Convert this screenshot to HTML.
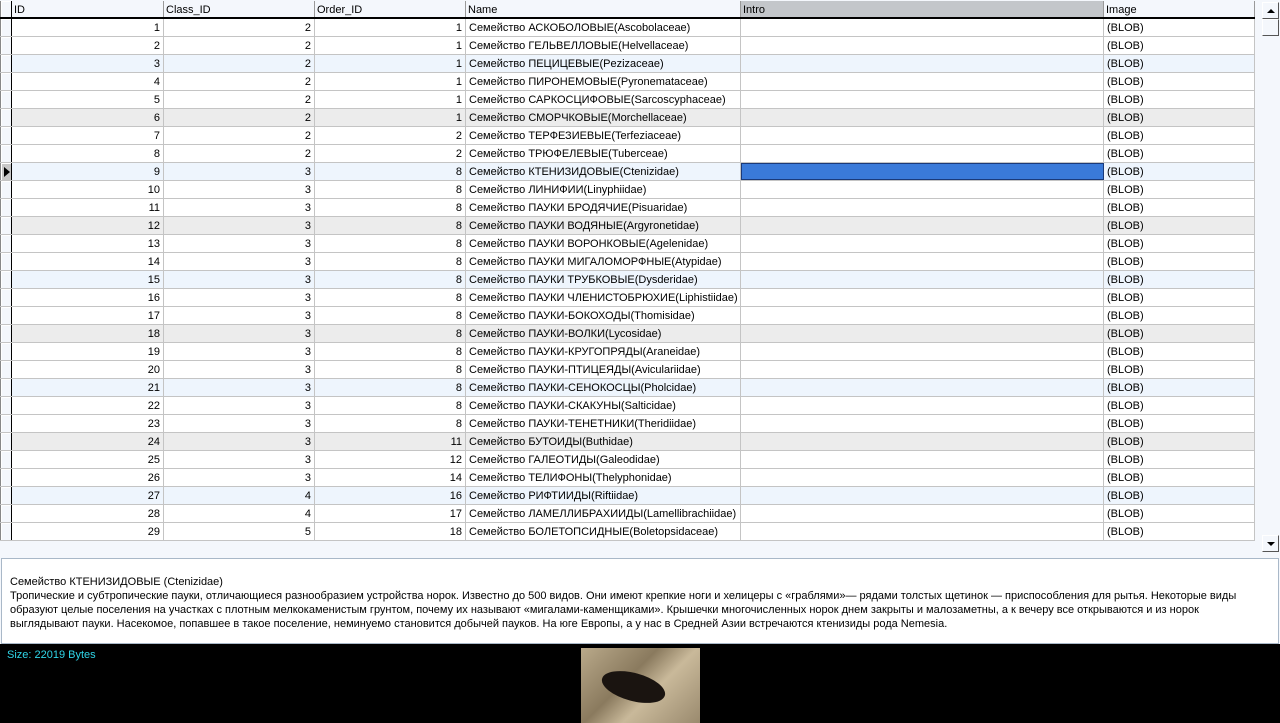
<!DOCTYPE html>
<html><head><meta charset="utf-8"><style>
*{box-sizing:border-box;margin:0;padding:0}
body{width:1280px;height:723px;overflow:hidden;background:#f4f7fc;font-family:"Liberation Sans","DejaVu Sans",sans-serif;font-size:11px;color:#000;position:relative}
#grid{position:absolute;left:0;top:1px;width:1255px}
.r{display:flex;height:18px;border-bottom:1px solid #c4c4c4;background:#fff}
.r div{border-right:1px solid #c4c4c4;padding:1px 3px 0;line-height:17px;white-space:nowrap;overflow:hidden}
.h{background:#f4f7fc;border-bottom:2px solid #000;height:18px}
.h div{border-right:1px solid #999;line-height:16px;padding:1px 2px 0}
.b{background:#eef5fd}.g{background:#ececec}
.c0{width:12px;padding:0!important;background:#f4f7fc;border-right:1px solid #000!important;border-left:1px solid #888;box-shadow:inset 1px 1px 0 #fff}
.c1{width:152px;text-align:right}.c2{width:151px;text-align:right}.c3{width:151px;text-align:right}
.c4{width:275px}.c5{width:363px}.c6{width:151px}
#sb{position:absolute;left:1261px;top:0;width:19px;height:553px;background:#f4f7fc}
.btn{position:absolute;left:1px;width:17px;height:17px;background:#f4f7fc;border:1px solid;border-color:#fff #555 #555 #fff}
#memo{position:absolute;left:1px;top:558px;width:1278px;height:86px;background:#fff;border:1px solid #a9b8c8;padding:16px 8px 0;line-height:14px;white-space:nowrap;overflow:hidden}
#blk{position:absolute;left:0;top:644px;width:1280px;height:79px;background:#000}
#sz{position:absolute;left:7px;top:5px;color:#2fd5e8}
#img{position:absolute;left:581px;top:4px;width:119px;height:75px;background:linear-gradient(135deg,#b9a98a,#8a7a5e 40%,#c9b99a 60%,#9a8a6e)}
</style></head><body>
<div id="grid">
<div class="r h"><div class="c0"></div><div class="c1" style="text-align:left">ID</div><div class="c2" style="text-align:left">Class_ID</div><div class="c3" style="text-align:left">Order_ID</div><div class="c4">Name</div><div class="c5" style="background:#c3c6ca">Intro</div><div class="c6">Image</div></div>
<div class="r"><div class="c0"></div><div class="c1">1</div><div class="c2">2</div><div class="c3">1</div><div class="c4">Семейство АСКОБОЛОВЫЕ(Ascobolaceae)</div><div class="c5"></div><div class="c6">(BLOB)</div></div>
<div class="r"><div class="c0"></div><div class="c1">2</div><div class="c2">2</div><div class="c3">1</div><div class="c4">Семейство ГЕЛЬВЕЛЛОВЫЕ(Helvellaceae)</div><div class="c5"></div><div class="c6">(BLOB)</div></div>
<div class="r b"><div class="c0"></div><div class="c1">3</div><div class="c2">2</div><div class="c3">1</div><div class="c4">Семейство ПЕЦИЦЕВЫЕ(Pezizaceae)</div><div class="c5"></div><div class="c6">(BLOB)</div></div>
<div class="r"><div class="c0"></div><div class="c1">4</div><div class="c2">2</div><div class="c3">1</div><div class="c4">Семейство ПИРОНЕМОВЫЕ(Pyronemataceae)</div><div class="c5"></div><div class="c6">(BLOB)</div></div>
<div class="r"><div class="c0"></div><div class="c1">5</div><div class="c2">2</div><div class="c3">1</div><div class="c4">Семейство САРКОСЦИФОВЫЕ(Sarcoscyphaceae)</div><div class="c5"></div><div class="c6">(BLOB)</div></div>
<div class="r g"><div class="c0"></div><div class="c1">6</div><div class="c2">2</div><div class="c3">1</div><div class="c4">Семейство СМОРЧКОВЫЕ(Morchellaceae)</div><div class="c5"></div><div class="c6">(BLOB)</div></div>
<div class="r"><div class="c0"></div><div class="c1">7</div><div class="c2">2</div><div class="c3">2</div><div class="c4">Семейство ТЕРФЕЗИЕВЫЕ(Terfeziaceae)</div><div class="c5"></div><div class="c6">(BLOB)</div></div>
<div class="r"><div class="c0"></div><div class="c1">8</div><div class="c2">2</div><div class="c3">2</div><div class="c4">Семейство ТРЮФЕЛЕВЫЕ(Tuberceae)</div><div class="c5"></div><div class="c6">(BLOB)</div></div>
<div class="r b"><div class="c0" style="background:#c8c8c8;position:relative"><span style="position:absolute;left:3px;top:4px;border-left:6px solid #000;border-top:5px solid transparent;border-bottom:5px solid transparent"></span></div><div class="c1">9</div><div class="c2">3</div><div class="c3">8</div><div class="c4">Семейство КТЕНИЗИДОВЫЕ(Ctenizidae)</div><div class="c5" style="background:#3a7ad9;border:1px solid #1a3a7a"></div><div class="c6">(BLOB)</div></div>
<div class="r"><div class="c0"></div><div class="c1">10</div><div class="c2">3</div><div class="c3">8</div><div class="c4">Семейство ЛИНИФИИ(Linyphiidae)</div><div class="c5"></div><div class="c6">(BLOB)</div></div>
<div class="r"><div class="c0"></div><div class="c1">11</div><div class="c2">3</div><div class="c3">8</div><div class="c4">Семейство ПАУКИ БРОДЯЧИЕ(Pisuaridae)</div><div class="c5"></div><div class="c6">(BLOB)</div></div>
<div class="r g"><div class="c0"></div><div class="c1">12</div><div class="c2">3</div><div class="c3">8</div><div class="c4">Семейство ПАУКИ ВОДЯНЫЕ(Argyronetidae)</div><div class="c5"></div><div class="c6">(BLOB)</div></div>
<div class="r"><div class="c0"></div><div class="c1">13</div><div class="c2">3</div><div class="c3">8</div><div class="c4">Семейство ПАУКИ ВОРОНКОВЫЕ(Agelenidae)</div><div class="c5"></div><div class="c6">(BLOB)</div></div>
<div class="r"><div class="c0"></div><div class="c1">14</div><div class="c2">3</div><div class="c3">8</div><div class="c4">Семейство ПАУКИ МИГАЛОМОРФНЫЕ(Atypidae)</div><div class="c5"></div><div class="c6">(BLOB)</div></div>
<div class="r b"><div class="c0"></div><div class="c1">15</div><div class="c2">3</div><div class="c3">8</div><div class="c4">Семейство ПАУКИ ТРУБКОВЫЕ(Dysderidae)</div><div class="c5"></div><div class="c6">(BLOB)</div></div>
<div class="r"><div class="c0"></div><div class="c1">16</div><div class="c2">3</div><div class="c3">8</div><div class="c4">Семейство ПАУКИ ЧЛЕНИСТОБРЮХИЕ(Liphistiidae)</div><div class="c5"></div><div class="c6">(BLOB)</div></div>
<div class="r"><div class="c0"></div><div class="c1">17</div><div class="c2">3</div><div class="c3">8</div><div class="c4">Семейство ПАУКИ-БОКОХОДЫ(Thomisidae)</div><div class="c5"></div><div class="c6">(BLOB)</div></div>
<div class="r g"><div class="c0"></div><div class="c1">18</div><div class="c2">3</div><div class="c3">8</div><div class="c4">Семейство ПАУКИ-ВОЛКИ(Lycosidae)</div><div class="c5"></div><div class="c6">(BLOB)</div></div>
<div class="r"><div class="c0"></div><div class="c1">19</div><div class="c2">3</div><div class="c3">8</div><div class="c4">Семейство ПАУКИ-КРУГОПРЯДЫ(Araneidae)</div><div class="c5"></div><div class="c6">(BLOB)</div></div>
<div class="r"><div class="c0"></div><div class="c1">20</div><div class="c2">3</div><div class="c3">8</div><div class="c4">Семейство ПАУКИ-ПТИЦЕЯДЫ(Aviculariidae)</div><div class="c5"></div><div class="c6">(BLOB)</div></div>
<div class="r b"><div class="c0"></div><div class="c1">21</div><div class="c2">3</div><div class="c3">8</div><div class="c4">Семейство ПАУКИ-СЕНОКОСЦЫ(Pholcidae)</div><div class="c5"></div><div class="c6">(BLOB)</div></div>
<div class="r"><div class="c0"></div><div class="c1">22</div><div class="c2">3</div><div class="c3">8</div><div class="c4">Семейство ПАУКИ-СКАКУНЫ(Salticidae)</div><div class="c5"></div><div class="c6">(BLOB)</div></div>
<div class="r"><div class="c0"></div><div class="c1">23</div><div class="c2">3</div><div class="c3">8</div><div class="c4">Семейство ПАУКИ-ТЕНЕТНИКИ(Theridiidae)</div><div class="c5"></div><div class="c6">(BLOB)</div></div>
<div class="r g"><div class="c0"></div><div class="c1">24</div><div class="c2">3</div><div class="c3">11</div><div class="c4">Семейство БУТОИДЫ(Buthidae)</div><div class="c5"></div><div class="c6">(BLOB)</div></div>
<div class="r"><div class="c0"></div><div class="c1">25</div><div class="c2">3</div><div class="c3">12</div><div class="c4">Семейство ГАЛЕОТИДЫ(Galeodidae)</div><div class="c5"></div><div class="c6">(BLOB)</div></div>
<div class="r"><div class="c0"></div><div class="c1">26</div><div class="c2">3</div><div class="c3">14</div><div class="c4">Семейство ТЕЛИФОНЫ(Thelyphonidae)</div><div class="c5"></div><div class="c6">(BLOB)</div></div>
<div class="r b"><div class="c0"></div><div class="c1">27</div><div class="c2">4</div><div class="c3">16</div><div class="c4">Семейство РИФТИИДЫ(Riftiidae)</div><div class="c5"></div><div class="c6">(BLOB)</div></div>
<div class="r"><div class="c0"></div><div class="c1">28</div><div class="c2">4</div><div class="c3">17</div><div class="c4">Семейство ЛАМЕЛЛИБРАХИИДЫ(Lamellibrachiidae)</div><div class="c5"></div><div class="c6">(BLOB)</div></div>
<div class="r"><div class="c0"></div><div class="c1">29</div><div class="c2">5</div><div class="c3">18</div><div class="c4">Семейство БОЛЕТОПСИДНЫЕ(Boletopsidaceae)</div><div class="c5"></div><div class="c6">(BLOB)</div></div>
</div>
<div id="sb"><div class="btn" style="top:2px"><span style="position:absolute;left:4px;top:6px;border-bottom:4px solid #000;border-left:4px solid transparent;border-right:4px solid transparent"></span></div><div class="btn" style="top:19px"></div><div class="btn" style="top:535px"><span style="position:absolute;left:4px;top:6px;border-top:4px solid #000;border-left:4px solid transparent;border-right:4px solid transparent"></span></div></div>
<div id="memo">Семейство КТЕНИЗИДОВЫЕ (Ctenizidae)<br>Тропические и субтропические пауки, отличающиеся разнообразием устройства норок. Известно до 500 видов. Они имеют крепкие ноги и хелицеры с «граблями»— рядами толстых щетинок — приспособления для рытья. Некоторые виды<br>образуют целые поселения на участках с плотным мелкокаменистым грунтом, почему их называют «мигалами-каменщиками». Крышечки многочисленных норок днем закрыты и малозаметны, а к вечеру все открываются и из норок<br>выглядывают пауки. Насекомое, попавшее в такое поселение, неминуемо становится добычей пауков. На юге Европы, а у нас в Средней Азии встречаются ктенизиды рода Nemesia.</div>
<div id="blk"><div id="sz">Size: 22019 Bytes</div><div id="img"><div style="position:absolute;left:20px;top:25px;width:65px;height:28px;border-radius:50%;background:#1a1410;transform:rotate(15deg)"></div></div></div>
</body></html>
